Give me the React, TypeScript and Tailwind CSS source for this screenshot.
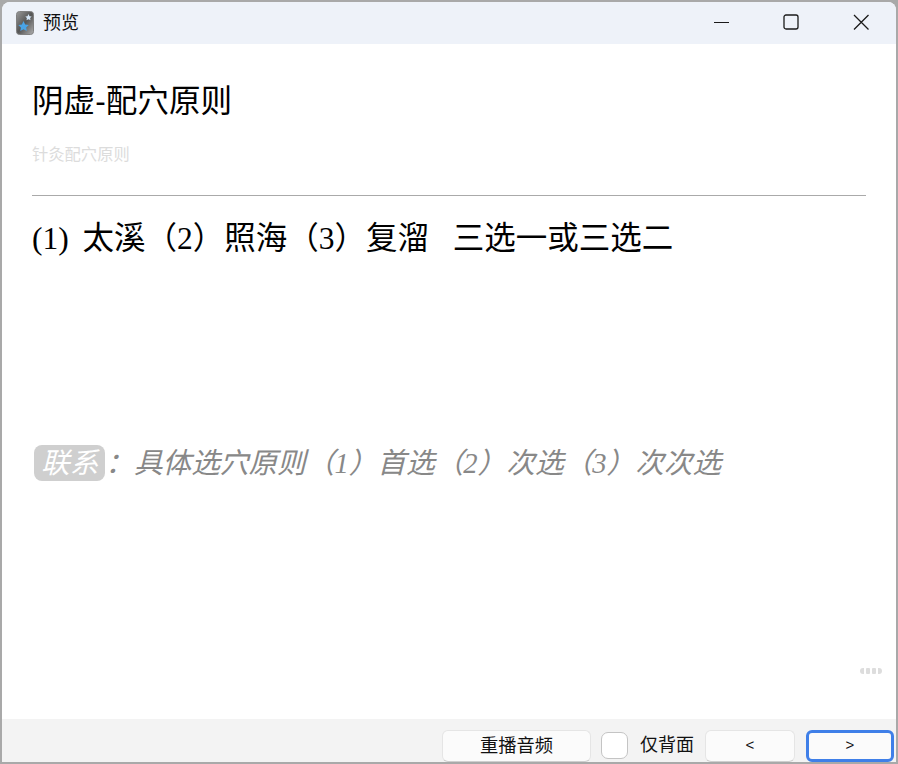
const SANS = "font-['Liberation_Sans','Noto_Sans_CJK_SC',sans-serif]";

function AppIcon() {
  return (
    <svg width="18" height="24" viewBox="0 0 18 24" className="block">
      <defs>
        <linearGradient id="g" x1="0" y1="0" x2="1" y2="1">
          <stop offset="0" stopColor="#9a9a9a" />
          <stop offset="0.5" stopColor="#555555" />
          <stop offset="1" stopColor="#b0b0b0" />
        </linearGradient>
      </defs>
      <rect x="0.5" y="0.5" width="17" height="23" rx="3" fill="url(#g)" stroke="#808080" />
      <path d="M12.5 3l1 2.2 2.2.3-1.6 1.5.4 2.2-2-1-2 1 .4-2.2-1.6-1.5 2.2-.3z" fill="#d5e6f7" />
      <path d="M7.5 10l1.7 3.4 3.6.5-2.6 2.5.6 3.6-3.3-1.7-3.2 1.7.6-3.6-2.6-2.5 3.6-.5z" fill="#49a3e6" />
    </svg>
  );
}

export default function App() {
  return (
    <div className={`${SANS} flex h-[764px] w-[898px] flex-col overflow-hidden bg-[#a9a9a9] p-[2px]`}>
      <div className="flex min-h-0 flex-1 flex-col overflow-hidden rounded-t-[8px] bg-white">
        <header className="flex h-[42px] shrink-0 items-center bg-[#eef2f9] pl-[14px]">
          <AppIcon />
          <span className="ml-[9px] text-[18px] text-[#111]">预览</span>
          <div className="mb-[2px] ml-auto flex items-center text-[#1a1a1a]">
            <svg width="16" height="16" viewBox="0 0 16 16" className="mr-[54px]">
              <path d="M1 8.5h15" stroke="currentColor" strokeWidth="1.2" />
            </svg>
            <svg width="16" height="16" viewBox="0 0 16 16" className="mr-[54px]">
              <rect x="1" y="1" width="14" height="14" rx="2" fill="none" stroke="currentColor" strokeWidth="1.3" />
            </svg>
            <svg width="16" height="16" viewBox="0 0 16 16" className="mr-[27px]">
              <path d="M1 1l14.5 14.5M15.5 1L1 15.5" stroke="currentColor" strokeWidth="1.3" />
            </svg>
          </div>
        </header>

        <main className="relative min-h-0 flex-1 px-[30px]">
          <h1 className="mt-[37px] text-[31.6px] leading-[40px] text-black">阴虚-配穴原则</h1>
          <p className="mt-[22px] text-[16.3px] leading-[22px] text-[#dcdcdc]">针灸配穴原则</p>
          <hr className="mt-[30px] border-0 border-t border-[#aaaaaa]" />
          <p className="mt-[21px] whitespace-pre font-['Liberation_Serif','Noto_Sans_CJK_SC',serif] text-[31.5px] leading-[44px] text-black">
            <span className="mr-[6px]">(1) </span>太溪（2）照海（3）复溜{"   "}三选一或三选二
          </p>
          <div className="mt-[184px] flex items-center whitespace-pre font-['Liberation_Serif','Noto_Sans_CJK_SC',serif] text-[28.65px] leading-[36px] italic text-[#888888]">
            <span className="ml-[2px] rounded-[8px] bg-[#cfcfcf] px-[7px] text-white">联系</span>
            <span>：具体选穴原则（1）首选（2）次选（3）次次选</span>
          </div>
          <div className="absolute right-[14px] bottom-[45px] flex gap-[2px]">
            <span className="h-[6px] w-[4px] rounded-l-full bg-[#dddddd]" />
            <span className="h-[6px] w-[4px] rounded-[1px] bg-[#dddddd]" />
            <span className="h-[6px] w-[4px] rounded-[1px] bg-[#dddddd]" />
            <span className="h-[6px] w-[4px] rounded-r-full bg-[#dddddd]" />
          </div>
        </main>

        <footer className="flex h-[43px] shrink-0 items-center justify-end bg-[#f3f3f3] pt-[10px] pr-[2px] text-[18px] text-[#111]">
          <button className="h-[32px] w-[149px] rounded-[6px] border border-[#e5e5e5] border-b-[#cfcfcf] bg-[#fbfbfb] text-[18.3px]">重播音频</button>
          <span className="ml-[10px] size-[27px] rounded-[7px] border border-[#c4c4c4] bg-white" />
          <span className="ml-[12px]">仅背面</span>
          <button className="ml-[11px] h-[32px] w-[90px] rounded-[6px] border border-[#e5e5e5] border-b-[#cfcfcf] bg-[#fbfbfb] text-[15px]">&lt;</button>
          <button className="ml-[11px] h-[32px] w-[88px] rounded-[6px] border-[3px] border-[#3f7fe8] bg-[#fbfbfb] text-[15px]">&gt;</button>
        </footer>
      </div>
    </div>
  );
}
